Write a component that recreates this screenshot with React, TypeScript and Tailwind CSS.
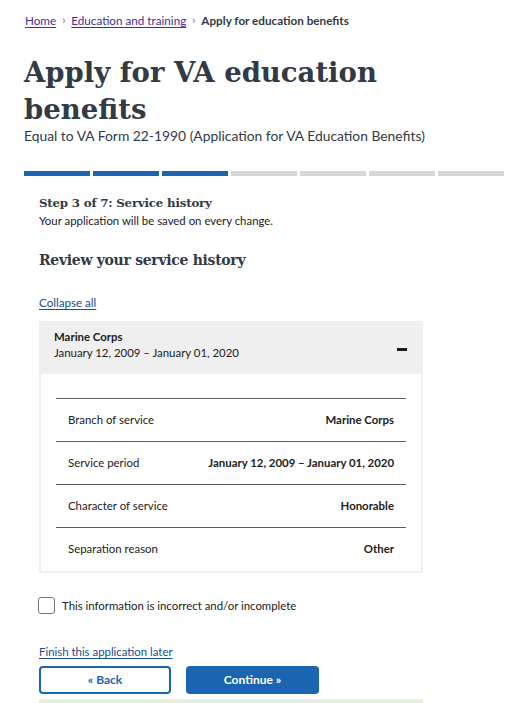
import React from 'react';

const rows = [
  { label: 'Branch of service', value: 'Marine Corps' },
  { label: 'Service period', value: 'January 12, 2009 – January 01, 2020' },
  { label: 'Character of service', value: 'Honorable' },
  { label: 'Separation reason', value: 'Other' },
];

const steps = [true, true, true, false, false, false, false];

function Crumb({ children }: { children: React.ReactNode }) {
  return (
    <a href="#" className="text-[#4c2c92] underline underline-offset-2">
      {children}
    </a>
  );
}

function Sep() {
  return <span className="mx-[6px] text-[#5b616b] text-[11px]">›</span>;
}

export default function App() {
  return (
    <div className="min-h-[703px] bg-white font-['Lato',sans-serif] text-[#212121] pl-[24px] pr-[10px] overflow-hidden">
      <nav className="pt-[12px] text-[11.7px] leading-[16px] flex items-center pl-[1px]">
        <Crumb>Home</Crumb>
        <Sep />
        <Crumb>Education and training</Crumb>
        <Sep />
        <span className="font-bold text-[#323a45]">Apply for education benefits</span>
      </nav>

      <h1 className="mt-[26px] font-['DejaVu_Serif',serif] font-bold text-[27.5px] leading-[37px] text-[#323a45] w-[400px]">
        Apply for VA education benefits
      </h1>
      <p className="mt-[-2px] text-[13.85px] leading-[20px] text-[#323a45]">
        Equal to VA Form 22-1990 (Application for VA Education Benefits)
      </p>

      <div className="mt-[25px] grid grid-cols-7 gap-[3px]">
        {steps.map((done, i) => (
          <div key={i} className={done ? 'h-[5px] bg-[#1b65b0]' : 'h-[5px] bg-[#d6d7d9]'} />
        ))}
      </div>

      <main className="ml-[15px] w-[384px]">
        <h2 className="mt-[17px] font-['DejaVu_Serif',serif] font-bold text-[11.8px] tracking-[-0.2px] leading-[20px] text-[#323a45]">
          Step 3 of 7: Service history
        </h2>
        <p className="text-[11.4px] leading-[16px]">Your application will be saved on every change.</p>

        <h3 className="mt-[19px] font-['DejaVu_Serif',serif] font-bold text-[14px] tracking-[-0.3px] leading-[24px] text-[#323a45]">
          Review your service history
        </h3>

        <a href="#" className="mt-[23px] block w-fit text-[11.6px] leading-[16px] text-[#1a4d8f] underline underline-offset-2">
          Collapse all
        </a>

        <section className="mt-[10px]">
          <div className="h-[53px] bg-[#efefef] pl-[15px] pr-[16px] flex justify-between items-start pt-[8px]">
            <div className="text-[11.4px] leading-[16px]">
              <div className="font-bold">Marine Corps</div>
              <div>January 12, 2009 – January 01, 2020</div>
            </div>
            <div className="mt-[19px] w-[10px] h-[3px] bg-[#1b1b1b]" />
          </div>
          <div className="border-x-2 border-b-2 border-[#f0f0f0] px-[15px] pt-[24px] pb-[1px]">
            {rows.map((r) => (
              <div
                key={r.label}
                className="h-[43px] border-t border-[#5c5c5c] px-[12px] flex items-center justify-between text-[11.4px]"
              >
                <span>{r.label}</span>
                <span className="font-bold">{r.value}</span>
              </div>
            ))}
          </div>
        </section>

        <label className="mt-[24px] flex items-center gap-[7px] text-[11.4px] leading-[16px]">
          <span className="ml-[-1px] w-[17px] h-[17px] rounded-[3px] border border-[#757575] bg-white" />
          This information is incorrect and/or incomplete
        </label>

        <a href="#" className="mt-[30px] block w-fit text-[11.4px] leading-[16px] text-[#1a4d8f] underline underline-offset-2">
          Finish this application later
        </a>

        <div className="mt-[6px] flex gap-[15px]">
          <button className="w-[132px] h-[28px] rounded-[4px] border-2 border-[#1b65b0] bg-white text-[#1b65b0] text-[12px] font-bold">
            « Back
          </button>
          <button className="w-[133px] h-[28px] rounded-[4px] bg-[#1b65b0] text-white text-[12px] font-bold">
            Continue »
          </button>
        </div>

        <div className="mt-[5px] h-[20px] bg-[#e4f2dd]" />
      </main>
    </div>
  );
}
